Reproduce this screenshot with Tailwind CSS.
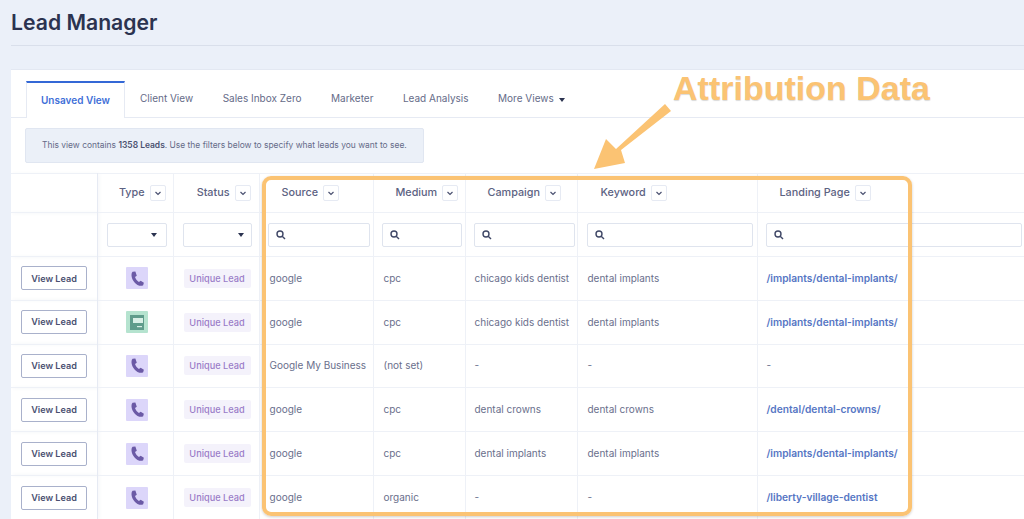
<!DOCTYPE html>
<html lang="en">
<head>
    <meta charset="UTF-8">
    <meta name="viewport" content="width=device-width, initial-scale=1.0">
    <title>Lead Manager</title>
    <script src="https://cdn.jsdelivr.net/npm/@tailwindcss/browser@4"></script>
</head>
<body class="bg-[#ebf0f9] font-['Inter',sans-serif] text-[#555b7d] h-[519px] overflow-hidden relative">
    <div class="pl-[11px]">
        <div class="h-[46px] border-b border-[#d9dfeb] flex items-start">
            <h1 class="text-[21.2px] leading-[24px] mt-[10px] font-semibold text-[#2b3350]">Lead Manager</h1>
        </div>

        <div class="mt-[23px] bg-white border-t border-[#e3e8f2] h-[461px] overflow-hidden">
            <!-- Tabs -->
            <div class="h-[48px] pt-[11px] pl-[15px] border-b border-[#e6eaf3] flex items-stretch gap-[29.5px] text-[10px] text-[#656b88]">
                <div class="w-[99px] -mr-[14.5px] h-[37px] bg-white border-x border-[#e6eaf3] border-t-2 border-t-[#3468d6] flex items-center justify-center font-semibold text-[#3f70d8]">Unsaved View</div>
                <div class="flex items-center pb-[2px]">Client View</div>
                <div class="flex items-center pb-[2px]">Sales Inbox Zero</div>
                <div class="flex items-center pb-[2px]">Marketer</div>
                <div class="flex items-center pb-[2px]">Lead Analysis</div>
                <div class="flex items-center pb-[2px] gap-[5px]">More Views <span class="w-0 h-0 mt-[3px] border-x-[3.5px] border-x-transparent border-t-[4px] border-t-[#2b3350]"></span></div>
            </div>

            <!-- Notice -->
            <div class="h-[55px] pt-[10px] pl-[14px]">
                <div class="w-[399px] h-[35px] bg-[#ebf0f8] border border-[#e0e6f1] rounded-[2px] flex items-center pl-[16px] text-[8.45px] text-[#656b88] whitespace-nowrap">
                    <span>This view contains <b class="font-semibold text-[#4a5070]">1358 Leads</b>. Use the filters below to specify what leads you want to see.</span>
                </div>
            </div>

            <!-- Leads table -->
            <table class="table-fixed border-collapse w-[1013px] text-[10px] text-[#6a6f8c]">
                <colgroup>
                    <col class="w-[86px]"><col class="w-[76px]"><col class="w-[86px]"><col class="w-[114px]"><col class="w-[92px]"><col class="w-[112px]"><col class="w-[180px]"><col class="w-[267px]">
                </colgroup>
                <thead>
                    <tr class="h-[39px] border-y border-[#eef1f7] text-[10.8px] text-[#5c6282] font-medium">
                        <th class="border-r border-[#e6eaf3] shadow-[2px_0_4px_rgba(60,80,130,0.06)]"></th>
                        <th class="border-r border-[#eef1f7] font-medium"><div class="flex items-center justify-end gap-[5px] pr-[7px]">Type <span class="w-[16px] h-[16px] border border-[#e6eaf3] rounded-[2px] flex items-center justify-center"><svg width="8" height="8" viewBox="0 0 8 8" fill="none" stroke="#4a5070" stroke-width="1.2"><path d="M1.5 3l2.5 2.5L6.5 3"/></svg></span></div></th>
                        <th class="border-r border-[#eef1f7] font-medium"><div class="flex items-center justify-end gap-[5px] pr-[8px]">Status <span class="w-[16px] h-[16px] border border-[#e6eaf3] rounded-[2px] flex items-center justify-center"><svg width="8" height="8" viewBox="0 0 8 8" fill="none" stroke="#4a5070" stroke-width="1.2"><path d="M1.5 3l2.5 2.5L6.5 3"/></svg></span></div></th>
                        <th class="border-r border-[#eef1f7] font-medium"><div class="flex items-center gap-[5px] pl-[22px]">Source <span class="w-[16px] h-[16px] border border-[#e6eaf3] rounded-[2px] flex items-center justify-center"><svg width="8" height="8" viewBox="0 0 8 8" fill="none" stroke="#4a5070" stroke-width="1.2"><path d="M1.5 3l2.5 2.5L6.5 3"/></svg></span></div></th>
                        <th class="border-r border-[#eef1f7] font-medium"><div class="flex items-center gap-[5px] pl-[22px]">Medium <span class="w-[16px] h-[16px] border border-[#e6eaf3] rounded-[2px] flex items-center justify-center"><svg width="8" height="8" viewBox="0 0 8 8" fill="none" stroke="#4a5070" stroke-width="1.2"><path d="M1.5 3l2.5 2.5L6.5 3"/></svg></span></div></th>
                        <th class="border-r border-[#eef1f7] font-medium"><div class="flex items-center gap-[5px] pl-[22px]">Campaign <span class="w-[16px] h-[16px] border border-[#e6eaf3] rounded-[2px] flex items-center justify-center"><svg width="8" height="8" viewBox="0 0 8 8" fill="none" stroke="#4a5070" stroke-width="1.2"><path d="M1.5 3l2.5 2.5L6.5 3"/></svg></span></div></th>
                        <th class="border-r border-[#eef1f7] font-medium"><div class="flex items-center gap-[5px] pl-[23px]">Keyword <span class="w-[16px] h-[16px] border border-[#e6eaf3] rounded-[2px] flex items-center justify-center"><svg width="8" height="8" viewBox="0 0 8 8" fill="none" stroke="#4a5070" stroke-width="1.2"><path d="M1.5 3l2.5 2.5L6.5 3"/></svg></span></div></th>
                        <th class="font-medium"><div class="flex items-center gap-[5px] pl-[22px]">Landing Page <span class="w-[16px] h-[16px] border border-[#e6eaf3] rounded-[2px] flex items-center justify-center"><svg width="8" height="8" viewBox="0 0 8 8" fill="none" stroke="#4a5070" stroke-width="1.2"><path d="M1.5 3l2.5 2.5L6.5 3"/></svg></span></div></th>
                    </tr>
                    <tr class="h-[44px] border-b border-[#eef1f7]">
                        <th class="border-r border-[#e6eaf3] shadow-[2px_0_4px_rgba(60,80,130,0.06)]"></th>
                        <th class="border-r border-[#eef1f7] pl-[9px] pr-[6px]"><div class="h-[24px] border border-[#dfe4ee] rounded-[2px] flex items-center justify-end pr-[9px]"><span class="w-0 h-0 border-x-[3px] border-x-transparent border-t-[4px] border-t-[#2b3350]"></span></div></th>
                        <th class="border-r border-[#eef1f7] pl-[9px] pr-[7px]"><div class="h-[24px] border border-[#dfe4ee] rounded-[2px] flex items-center justify-end pr-[7px]"><span class="w-0 h-0 border-x-[3px] border-x-transparent border-t-[4px] border-t-[#2b3350]"></span></div></th>
                        <th class="border-r border-[#eef1f7] pl-[8px] pr-[3px]"><div class="h-[24px] border border-[#dfe4ee] rounded-[2px] flex items-center pl-[7px]"><svg width="10" height="10" viewBox="0 0 10 10" fill="none" stroke="#3f4766" stroke-width="1.4"><circle cx="4" cy="4" r="3"/><path d="M6.2 6.2L9 9"/></svg></div></th>
                        <th class="border-r border-[#eef1f7] pl-[8px] pr-[3px]"><div class="h-[24px] border border-[#dfe4ee] rounded-[2px] flex items-center pl-[7px]"><svg width="10" height="10" viewBox="0 0 10 10" fill="none" stroke="#3f4766" stroke-width="1.4"><circle cx="4" cy="4" r="3"/><path d="M6.2 6.2L9 9"/></svg></div></th>
                        <th class="border-r border-[#eef1f7] pl-[8px] pr-[2px]"><div class="h-[24px] border border-[#dfe4ee] rounded-[2px] flex items-center pl-[7px]"><svg width="10" height="10" viewBox="0 0 10 10" fill="none" stroke="#3f4766" stroke-width="1.4"><circle cx="4" cy="4" r="3"/><path d="M6.2 6.2L9 9"/></svg></div></th>
                        <th class="border-r border-[#eef1f7] pl-[9px] pr-[4px]"><div class="h-[24px] border border-[#dfe4ee] rounded-[2px] flex items-center pl-[7px]"><svg width="10" height="10" viewBox="0 0 10 10" fill="none" stroke="#3f4766" stroke-width="1.4"><circle cx="4" cy="4" r="3"/><path d="M6.2 6.2L9 9"/></svg></div></th>
                        <th class="pl-[8px] pr-[2px]"><div class="h-[24px] border border-[#dfe4ee] rounded-[2px] flex items-center pl-[7px]"><svg width="10" height="10" viewBox="0 0 10 10" fill="none" stroke="#3f4766" stroke-width="1.4"><circle cx="4" cy="4" r="3"/><path d="M6.2 6.2L9 9"/></svg></div></th>
                    </tr>
                </thead>
                <tbody>
                    <tr class="h-[43.8px] border-b border-[#eef1f7]">
                        <td class="border-r border-[#e6eaf3] pl-[10px] shadow-[2px_0_4px_rgba(60,80,130,0.06)]"><button class="w-[66px] h-[24px] border border-[#a9b1cb] rounded-[2px] text-[9.1px] font-semibold text-[#4a5070]">View Lead</button></td>
                        <td class="border-r border-[#eef1f7]"><div class="w-[22px] h-[22px] ml-[28.5px] bg-[#dcd6fa] rounded-[1px] flex items-center justify-center"><svg width="17" height="17" viewBox="0 0 24 24" fill="#6b5aa6"><path d="M5 2.5L9 2l2 6-2.500 2c1 3 3 5.500 5.500 7l2.500-2 4.500 3-1 3.500c-2 1.500-5 1-8-.5C7 18 3.500 12 3.500 7c0-2 .5-3.500 1.500-4.500z"/></svg></div></td>
                        <td class="border-r border-[#eef1f7] pl-[10px]"><span class="inline-block w-[67px] h-[19px] leading-[19px] text-center bg-[#f4f2fb] rounded-[2px] text-[9.2px] font-medium text-[#9a7cc8] whitespace-nowrap">Unique Lead</span></td>
                        <td class="border-r border-[#eef1f7] pl-[10px]">google</td>
                        <td class="border-r border-[#eef1f7] pl-[10px]">cpc</td>
                        <td class="border-r border-[#eef1f7] pl-[9px] whitespace-nowrap">chicago kids dentist</td>
                        <td class="border-r border-[#eef1f7] pl-[10px]">dental implants</td>
                        <td class="pl-[9px] text-[10.2px] font-semibold text-[#5676c4]">/implants/dental-implants/</td>
                    </tr>
                    <tr class="h-[43.8px] border-b border-[#eef1f7]">
                        <td class="border-r border-[#e6eaf3] pl-[10px] shadow-[2px_0_4px_rgba(60,80,130,0.06)]"><button class="w-[66px] h-[24px] border border-[#a9b1cb] rounded-[2px] text-[9.1px] font-semibold text-[#4a5070]">View Lead</button></td>
                        <td class="border-r border-[#eef1f7]"><div class="w-[22px] h-[22px] ml-[28.5px] bg-[#b5e3cf] rounded-[1px] flex items-center justify-center"><svg width="14" height="15" viewBox="0 0 14 15"><rect width="14" height="15" fill="#5f9c8b"/><rect x="3" y="3" width="10" height="5" fill="#d9efe6"/><rect x="7" y="11" width="5" height="1.200" fill="#d9efe6"/></svg></div></td>
                        <td class="border-r border-[#eef1f7] pl-[10px]"><span class="inline-block w-[67px] h-[19px] leading-[19px] text-center bg-[#f4f2fb] rounded-[2px] text-[9.2px] font-medium text-[#9a7cc8] whitespace-nowrap">Unique Lead</span></td>
                        <td class="border-r border-[#eef1f7] pl-[10px]">google</td>
                        <td class="border-r border-[#eef1f7] pl-[10px]">cpc</td>
                        <td class="border-r border-[#eef1f7] pl-[9px] whitespace-nowrap">chicago kids dentist</td>
                        <td class="border-r border-[#eef1f7] pl-[10px]">dental implants</td>
                        <td class="pl-[9px] text-[10.2px] font-semibold text-[#5676c4]">/implants/dental-implants/</td>
                    </tr>
                    <tr class="h-[43.8px] border-b border-[#eef1f7]">
                        <td class="border-r border-[#e6eaf3] pl-[10px] shadow-[2px_0_4px_rgba(60,80,130,0.06)]"><button class="w-[66px] h-[24px] border border-[#a9b1cb] rounded-[2px] text-[9.1px] font-semibold text-[#4a5070]">View Lead</button></td>
                        <td class="border-r border-[#eef1f7]"><div class="w-[22px] h-[22px] ml-[28.5px] bg-[#dcd6fa] rounded-[1px] flex items-center justify-center"><svg width="17" height="17" viewBox="0 0 24 24" fill="#6b5aa6"><path d="M5 2.5L9 2l2 6-2.500 2c1 3 3 5.500 5.500 7l2.500-2 4.500 3-1 3.500c-2 1.500-5 1-8-.5C7 18 3.500 12 3.500 7c0-2 .5-3.500 1.500-4.500z"/></svg></div></td>
                        <td class="border-r border-[#eef1f7] pl-[10px]"><span class="inline-block w-[67px] h-[19px] leading-[19px] text-center bg-[#f4f2fb] rounded-[2px] text-[9.2px] font-medium text-[#9a7cc8] whitespace-nowrap">Unique Lead</span></td>
                        <td class="border-r border-[#eef1f7] pl-[10px] whitespace-nowrap">Google My Business</td>
                        <td class="border-r border-[#eef1f7] pl-[10px]">(not set)</td>
                        <td class="border-r border-[#eef1f7] pl-[9px]">-</td>
                        <td class="border-r border-[#eef1f7] pl-[10px]">-</td>
                        <td class="pl-[9px]">-</td>
                    </tr>
                    <tr class="h-[43.8px] border-b border-[#eef1f7]">
                        <td class="border-r border-[#e6eaf3] pl-[10px] shadow-[2px_0_4px_rgba(60,80,130,0.06)]"><button class="w-[66px] h-[24px] border border-[#a9b1cb] rounded-[2px] text-[9.1px] font-semibold text-[#4a5070]">View Lead</button></td>
                        <td class="border-r border-[#eef1f7]"><div class="w-[22px] h-[22px] ml-[28.5px] bg-[#dcd6fa] rounded-[1px] flex items-center justify-center"><svg width="17" height="17" viewBox="0 0 24 24" fill="#6b5aa6"><path d="M5 2.5L9 2l2 6-2.500 2c1 3 3 5.500 5.500 7l2.500-2 4.500 3-1 3.500c-2 1.500-5 1-8-.5C7 18 3.500 12 3.500 7c0-2 .5-3.500 1.500-4.500z"/></svg></div></td>
                        <td class="border-r border-[#eef1f7] pl-[10px]"><span class="inline-block w-[67px] h-[19px] leading-[19px] text-center bg-[#f4f2fb] rounded-[2px] text-[9.2px] font-medium text-[#9a7cc8] whitespace-nowrap">Unique Lead</span></td>
                        <td class="border-r border-[#eef1f7] pl-[10px]">google</td>
                        <td class="border-r border-[#eef1f7] pl-[10px]">cpc</td>
                        <td class="border-r border-[#eef1f7] pl-[9px]">dental crowns</td>
                        <td class="border-r border-[#eef1f7] pl-[10px]">dental crowns</td>
                        <td class="pl-[9px] text-[10.2px] font-semibold text-[#5676c4]">/dental/dental-crowns/</td>
                    </tr>
                    <tr class="h-[43.8px] border-b border-[#eef1f7]">
                        <td class="border-r border-[#e6eaf3] pl-[10px] shadow-[2px_0_4px_rgba(60,80,130,0.06)]"><button class="w-[66px] h-[24px] border border-[#a9b1cb] rounded-[2px] text-[9.1px] font-semibold text-[#4a5070]">View Lead</button></td>
                        <td class="border-r border-[#eef1f7]"><div class="w-[22px] h-[22px] ml-[28.5px] bg-[#dcd6fa] rounded-[1px] flex items-center justify-center"><svg width="17" height="17" viewBox="0 0 24 24" fill="#6b5aa6"><path d="M5 2.5L9 2l2 6-2.500 2c1 3 3 5.500 5.500 7l2.500-2 4.500 3-1 3.500c-2 1.500-5 1-8-.5C7 18 3.500 12 3.500 7c0-2 .5-3.500 1.500-4.500z"/></svg></div></td>
                        <td class="border-r border-[#eef1f7] pl-[10px]"><span class="inline-block w-[67px] h-[19px] leading-[19px] text-center bg-[#f4f2fb] rounded-[2px] text-[9.2px] font-medium text-[#9a7cc8] whitespace-nowrap">Unique Lead</span></td>
                        <td class="border-r border-[#eef1f7] pl-[10px]">google</td>
                        <td class="border-r border-[#eef1f7] pl-[10px]">cpc</td>
                        <td class="border-r border-[#eef1f7] pl-[9px]">dental implants</td>
                        <td class="border-r border-[#eef1f7] pl-[10px]">dental implants</td>
                        <td class="pl-[9px] text-[10.2px] font-semibold text-[#5676c4]">/implants/dental-implants/</td>
                    </tr>
                    <tr class="h-[43.8px]">
                        <td class="border-r border-[#e6eaf3] pl-[10px] shadow-[2px_0_4px_rgba(60,80,130,0.06)]"><button class="w-[66px] h-[24px] border border-[#a9b1cb] rounded-[2px] text-[9.1px] font-semibold text-[#4a5070]">View Lead</button></td>
                        <td class="border-r border-[#eef1f7]"><div class="w-[22px] h-[22px] ml-[28.5px] bg-[#dcd6fa] rounded-[1px] flex items-center justify-center"><svg width="17" height="17" viewBox="0 0 24 24" fill="#6b5aa6"><path d="M5 2.5L9 2l2 6-2.500 2c1 3 3 5.500 5.500 7l2.500-2 4.500 3-1 3.500c-2 1.500-5 1-8-.5C7 18 3.500 12 3.500 7c0-2 .5-3.500 1.500-4.500z"/></svg></div></td>
                        <td class="border-r border-[#eef1f7] pl-[10px]"><span class="inline-block w-[67px] h-[19px] leading-[19px] text-center bg-[#f4f2fb] rounded-[2px] text-[9.2px] font-medium text-[#9a7cc8] whitespace-nowrap">Unique Lead</span></td>
                        <td class="border-r border-[#eef1f7] pl-[10px]">google</td>
                        <td class="border-r border-[#eef1f7] pl-[10px]">organic</td>
                        <td class="border-r border-[#eef1f7] pl-[9px]">-</td>
                        <td class="border-r border-[#eef1f7] pl-[10px]">-</td>
                        <td class="pl-[9px] text-[10.2px] font-semibold text-[#5676c4]">/liberty-village-dentist</td>
                    </tr>
                </tbody>
            </table>
        </div>
    </div>

    <!-- Annotation drawn over the screenshot -->
    <div class="absolute left-[262px] top-[176px] w-[650px] h-[340px] border-[4px] border-[#fbc373] rounded-[9px] shadow-[0_1px_3px_rgba(0,0,0,0.2)] pointer-events-none"></div>
    <div class="absolute left-[673px] top-[68px] text-[34px] leading-[40px] font-bold font-['Liberation_Sans',sans-serif] text-[#fbc373] whitespace-nowrap [text-shadow:0_1px_1px_rgba(0,0,0,0.15)]">Attribution Data</div>
    <svg class="absolute left-[590px] top-[100px]" width="84" height="72" viewBox="590 100 84 72">
        <path d="M665 104l6 7-50 39 4 13-31 6 12-30 10 10z" fill="#fbc373"/>
    </svg>
</body>
</html>
